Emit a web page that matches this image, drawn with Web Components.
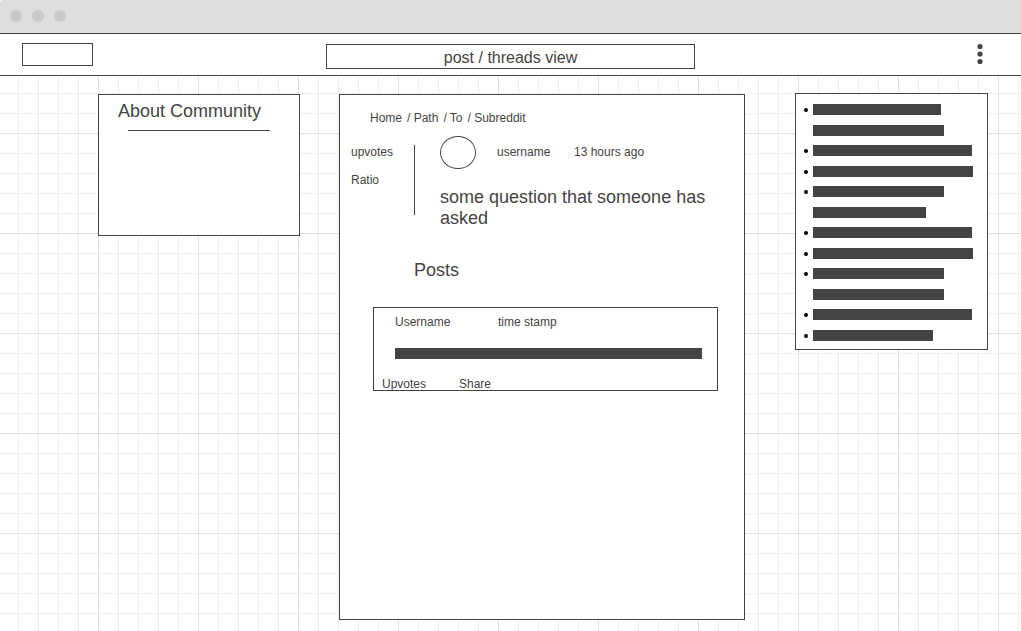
<!DOCTYPE html>
<html lang="en">
<head>
<meta charset="utf-8">
<meta name="viewport" content="width=device-width, initial-scale=1">
<title>post / threads view</title>
<style>
  body { margin: 0; font: 12px/14px "Liberation Sans", Arial, sans-serif; color: #444; background: #fff; }
</style>
</head>
<body>
<wire-window>
  <title-bar slot="top">post / threads view</title-bar>
  <about-card>About Community</about-card>
  <thread-card>
    <a slot="path" href="#home">Home</a>
    <a slot="path" href="#path">Path</a>
    <a slot="path" href="#to">To</a>
    <a slot="path" href="#subreddit">Subreddit</a>
    <span slot="author">username</span>
    <span slot="time">13 hours ago</span>
    <span slot="question">some question that someone has asked</span>
    <post-card>
      <span slot="author">Username</span>
      <span slot="time">time stamp</span>
    </post-card>
  </thread-card>
  <link-list></link-list>
</wire-window>
<script>
const define = (name, html) => {
  const template = document.createElement('template');
  template.innerHTML = html;
  customElements.define(name, class extends HTMLElement {
    constructor() {
      super();
      this.attachShadow({ mode: 'open' }).append(template.content.cloneNode(true));
    }
  });
};

define('wire-window', `
<style>
  :host { display: flex; flex-direction: column; min-height: 100vh; }
  .chrome { display: flex; gap: 10px; padding: 10px; height: 13px; background: #ddd;
    border-bottom: 1px solid #444; border-radius: 3px 0 0 0; }
  .chrome i { width: 12px; height: 12px; border-radius: 50%; background: #c9c9c9; }
  main { flex: 1; display: grid; grid-template-columns: minmax(0, 202fr) minmax(0, 406fr) minmax(0, 204fr);
    column-gap: 39px; padding: 17px 33px 11px 98px;
    background:
      linear-gradient(#e0e0e0 1px, transparent 1px) 0 57px / 100px 100px,
      linear-gradient(90deg, #e0e0e0 1px, transparent 1px) 98px 0 / 100px 100px,
      linear-gradient(#eee 1px, transparent 1px) 0 17px / 20px 20px,
      linear-gradient(90deg, #eee 1px, transparent 1px) 18px 0 / 20px 20px; }
</style>
<div class="chrome"><i></i><i></i><i></i></div>
<slot name="top"></slot>
<main><slot></slot></main>`);

define('title-bar', `
<style>
  :host { display: grid; grid-template-columns: 1fr minmax(0, 369px) 1fr; align-items: start;
    height: 41px; border-bottom: 1px solid #444; background: #fff; }
  .logo { box-sizing: border-box; width: 71px; height: 23px; margin: 9px 22px 0; border: 1px solid #444; }
  h1 { box-sizing: border-box; height: 25px; margin: 10px 0 0; padding-top: 4px; border: 1px solid #444;
    font-size: 16px; line-height: 18px; font-weight: normal; text-align: center; }
  button { justify-self: end; display: block; margin: 9px 36px 0; padding: 0; border: 0; background: none;
    color: inherit; height: 22px; cursor: pointer; }
  svg { display: block; }
</style>
<div class="logo"></div>
<h1><slot></slot></h1>
<button type="button" aria-label="Menu"><svg width="10" height="22" fill="#444">
  <circle cx="5" cy="3.5" r="2.6"/><circle cx="5" cy="11" r="2.6"/><circle cx="5" cy="18.5" r="2.6"/>
</svg></button>`);

define('about-card', `
<style>
  :host { display: block; box-sizing: border-box; align-self: start; height: 142px; margin-top: 1px;
    padding: 6px 19px; border: 1px solid #444; background: #fff; }
  h2 { margin: 0; font-size: 18px; line-height: 21px; font-weight: normal; }
  hr { margin: 8px 10px 0; border: 0; border-top: 1px solid #444; }
</style>
<h2><slot></slot></h2>
<hr>`);

define('thread-card', `
<style>
  :host { display: block; margin-top: 1px; border: 1px solid #444; background: #fff; }
  nav { display: flex; gap: 5px; padding: 16px 30px 11px; }
  nav slot { display: contents; }
  ::slotted(a) { color: inherit; text-decoration: none; }
  ::slotted(a:not(:first-child))::before { content: "/ "; }
  article { display: flex; gap: 25px; padding: 0 11px; }
  .votes { flex: none; box-sizing: border-box; width: 64px; height: 70px; margin-top: 9px;
    border-right: 1px solid #444; }
  .votes p { margin: 0 0 14px; }
  header { display: flex; align-items: start; height: 33px; line-height: 32px; }
  .avatar { box-sizing: border-box; width: 36px; height: 33px; margin-right: 21px;
    border: 1px solid #444; border-radius: 50%; }
  .author { width: 77px; }
  h2, h3 { font-size: 18px; line-height: 21px; font-weight: normal; }
  h2 { margin: 18px 0 0; }
  h3 { margin: 31px 74px 26px; }
  .posts { margin: 0 26px 0 33px; }
</style>
<nav aria-label="Breadcrumb"><slot name="path"></slot></nav>
<article>
  <div class="votes"><p>upvotes</p><p>Ratio</p></div>
  <div>
    <header>
      <div class="avatar"></div>
      <div class="author"><slot name="author"></slot></div>
      <slot name="time"></slot>
    </header>
    <h2><slot name="question"></slot></h2>
  </div>
</article>
<h3>Posts</h3>
<div class="posts"><slot></slot></div>`);

define('post-card', `
<style>
  :host { display: block; border: 1px solid #444; }
  header { display: grid; grid-template-columns: 103px 1fr; padding: 7px 21px 19px; }
  .line { height: 11px; margin: 0 15px 0 21px; background: #444; }
  footer { display: grid; grid-template-columns: 77px 1fr; padding: 19px 8px 0; }
  button { justify-self: start; padding: 0; border: 0; background: none; color: inherit;
    font: inherit; line-height: 12px; height: 12px; cursor: pointer; }
</style>
<header><slot name="author"></slot><slot name="time"></slot></header>
<div class="line"></div>
<footer><button type="button">Upvotes</button><button type="button">Share</button></footer>`);

define('link-list', `
<style>
  :host { display: block; box-sizing: border-box; align-self: start; margin-left: 11px;
    padding: 10px 14px 8px 8px; border: 1px solid #444; background: #fff; }
  ul { margin: 0; padding: 0; list-style: none; }
  li { display: grid; grid-template-columns: 4px 1fr; column-gap: 5px; }
  li::before { content: ""; width: 4px; height: 4px; margin-top: 4px; border-radius: 50%; background: #000; }
  i { grid-column: 2; height: 11px; width: var(--w); max-width: 100%; }
  i { background: #444; margin-bottom: 10px; }
  i.tight { margin-bottom: 9px; }
  li:last-child i { margin-bottom: 0; }
</style>
<ul>
  <li><i style="--w:128px"></i><i class="tight" style="--w:131px"></i></li>
  <li><i style="--w:159px"></i></li>
  <li><i class="tight" style="--w:160px"></i></li>
  <li><i style="--w:131px"></i><i class="tight" style="--w:113px"></i></li>
  <li><i style="--w:159px"></i></li>
  <li><i class="tight" style="--w:160px"></i></li>
  <li><i style="--w:131px"></i><i class="tight" style="--w:131px"></i></li>
  <li><i style="--w:159px"></i></li>
  <li><i style="--w:120px"></i></li>
</ul>`);
</script>
</body>
</html>
